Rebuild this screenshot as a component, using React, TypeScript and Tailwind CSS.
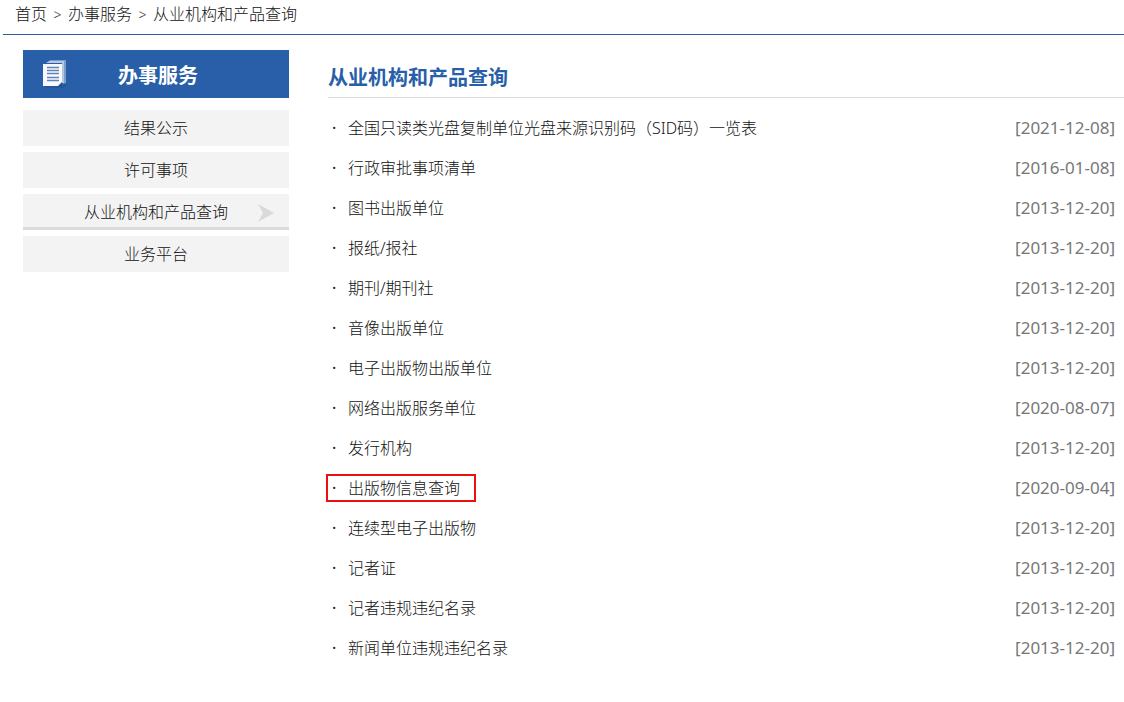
interface Article {
  title: string
  date: string
  marked?: boolean
}

const MENU = ['结果公示', '许可事项', '从业机构和产品查询', '业务平台']
const CURRENT = '从业机构和产品查询'

const ARTICLES: Article[] = [
  { title: '全国只读类光盘复制单位光盘来源识别码（SID码）一览表', date: '2021-12-08' },
  { title: '行政审批事项清单', date: '2016-01-08' },
  { title: '图书出版单位', date: '2013-12-20' },
  { title: '报纸/报社', date: '2013-12-20' },
  { title: '期刊/期刊社', date: '2013-12-20' },
  { title: '音像出版单位', date: '2013-12-20' },
  { title: '电子出版物出版单位', date: '2013-12-20' },
  { title: '网络出版服务单位', date: '2020-08-07' },
  { title: '发行机构', date: '2013-12-20' },
  { title: '出版物信息查询', date: '2020-09-04', marked: true },
  { title: '连续型电子出版物', date: '2013-12-20' },
  { title: '记者证', date: '2013-12-20' },
  { title: '记者违规违纪名录', date: '2013-12-20' },
  { title: '新闻单位违规违纪名录', date: '2013-12-20' },
]

function PagesIcon() {
  return (
    <svg width="32" height="32" viewBox="0 0 32 32" aria-hidden="true">
      <path d="M4 28h18l4-3v3l-3 2H7z" fill="#24569a" />
      <path d="M10 2h16v23l-3 1V5H8z" fill="#7d9dcb" />
      <path d="M9 3h15v22h-2V5H6z" fill="#b4c7e2" />
      <path d="M3 6h19v19l-3 3H3z" fill="#f7f9fd" />
      <path d="M22 24v4h-4z" fill="#2a4f86" />
      <path d="M7 9.5h12M7 12.5h12M7 15.5h12M7 19.5h12M7 22.5h12" stroke="#5f83b8" strokeWidth="1.4" />
    </svg>
  )
}

function Breadcrumb() {
  return (
    <nav className="ml-[3px] flex h-[35px] items-start gap-[6px] border-b border-[#2c5f9e] pl-3 leading-7">
      <a href="#">首页</a>
      <span className="w-[9px] text-center text-sm leading-[30px] text-[#333]">&gt;</span>
      <a href="#">办事服务</a>
      <span className="w-[9px] text-center text-sm leading-[30px] text-[#333]">&gt;</span>
      <a href="#">从业机构和产品查询</a>
    </nav>
  )
}

function Sidebar() {
  return (
    <aside className="w-[266px] shrink-0">
      <h2 className="relative h-12 bg-[#285fa8] pl-1 text-center text-xl font-bold leading-[52px] text-white">
        <span className="absolute left-[17px] top-2"><PagesIcon /></span>
        办事服务
      </h2>
      <ul className="mt-3 flex flex-col gap-[6px]">
        {MENU.map(name => (
          <li key={name}>
            <a
              href="#"
              className={`relative flex h-9 items-center justify-center bg-[#f3f3f3] ${
                name === CURRENT ? 'shadow-[inset_0_-3px_0_#dcdcdc]' : ''
              }`}
            >
              {name}
              {name === CURRENT && (
                <svg className="absolute right-[15px] top-[10px]" width="16" height="18" viewBox="0 0 16 18" aria-hidden="true">
                  <path d="M0 0L16 9L0 18L5 9z" fill="#d9d9d9" />
                </svg>
              )}
            </a>
          </li>
        ))}
      </ul>
    </aside>
  )
}

export default function App() {
  return (
    <div className="bg-white pb-8 font-['Noto_Sans','Noto_Sans_CJK_SC',sans-serif] text-base font-light text-[#111]">
      <Breadcrumb />
      <div className="flex gap-[39px] pl-[23px] pt-[15px]">
        <Sidebar />
        <main className="min-w-0 flex-1">
          <h1 className="h-12 border-b border-[#d9d9d9] text-xl font-bold leading-[56px] text-[#285fa8]">
            从业机构和产品查询
          </h1>
          <ul className="pt-[10px]">
            {ARTICLES.map(a => (
              <li key={a.title} className="flex h-10 items-center justify-between pr-[9px]">
                <a
                  href="#"
                  className={`relative flex items-center pl-1 ${
                    a.marked
                      ? "before:absolute before:-left-[2px] before:-right-4 before:-inset-y-[2px] before:border-2 before:border-[#e81010] before:content-['']"
                      : ''
                  }`}
                >
                  <span className="w-4 font-normal">·</span>
                  {a.title}
                </a>
                <time dateTime={a.date} className="text-[17px] font-normal text-[#777]">[{a.date}]</time>
              </li>
            ))}
          </ul>
        </main>
      </div>
    </div>
  )
}
